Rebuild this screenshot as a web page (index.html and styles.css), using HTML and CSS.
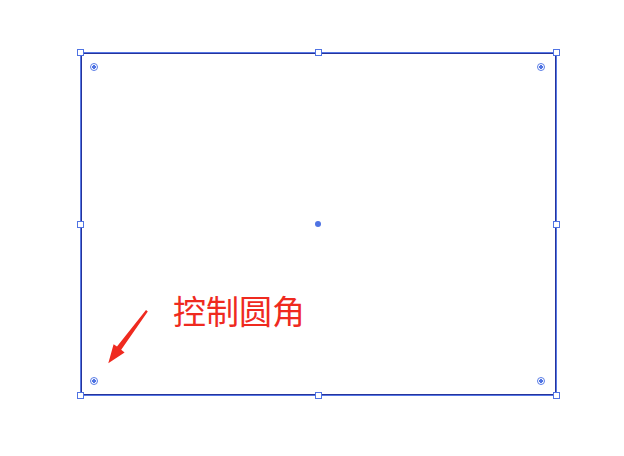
FILE: index.html
```html
<!DOCTYPE html>
<html lang="zh">
<head>
<meta charset="utf-8">
<link rel="stylesheet" href="styles.css">
</head>
<body>
<div class="page">
  <div class="frame">
    <span class="handle h-tl"></span>
    <span class="handle h-tm"></span>
    <span class="handle h-tr"></span>
    <span class="handle h-ml"></span>
    <span class="handle h-mr"></span>
    <span class="handle h-bl"></span>
    <span class="handle h-bm"></span>
    <span class="handle h-br"></span>
    <span class="radius r-tl"></span>
    <span class="radius r-tr"></span>
    <span class="radius r-bl"></span>
    <span class="radius r-br"></span>
    <span class="center-dot"></span>
    <span class="label">控制圆角</span>
    <svg class="arrow" width="60" height="70" viewBox="100 300 60 70">
      <polygon points="147.8,311.4 121.2,349.8 124.6,352.4 108.3,363.2 113.6,344.2 117.0,346.6 146.0,310.0" fill="#ef2a1f"/>
    </svg>
  </div>
</div>
</body>
</html>
```
FILE: styles.css
```css
html, body {
  margin: 0;
  padding: 0;
  background: #ffffff;
}
.page {
  width: 624px;
  height: 456px;
  padding: 52px 0 0 80px;
  box-sizing: border-box;
}
.frame {
  position: relative;
  width: 477px;
  height: 344px;
  box-sizing: border-box;
  border: 1px solid #5577e6;
  box-shadow: inset 0 0 0 1px #27339a;
}
.handle {
  position: absolute;
  width: 7px;
  height: 7px;
  box-sizing: border-box;
  background: #ffffff;
  border: 1px solid #4f73e3;
}
.h-tl { left: -4px; top: -4px; }
.h-tm { left: 234px; top: -4px; }
.h-tr { right: -4px; top: -4px; }
.h-ml { left: -4px; top: 168px; }
.h-mr { right: -4px; top: 168px; }
.h-bl { left: -4px; bottom: -4px; }
.h-bm { left: 234px; bottom: -4px; }
.h-br { right: -4px; bottom: -4px; }
.radius {
  position: absolute;
  width: 8px;
  height: 8px;
  box-sizing: border-box;
  border: 1px solid #5a7de6;
  border-radius: 50%;
  background: radial-gradient(circle, #4f73e3 0 1.8px, #ffffff 2.1px);
}
.r-tl { left: 9px; top: 10px; }
.r-tr { right: 11px; top: 10px; }
.r-bl { left: 9px; bottom: 10px; }
.r-br { right: 11px; bottom: 10px; }
.center-dot {
  position: absolute;
  left: 234px;
  top: 168px;
  width: 6px;
  height: 6px;
  border-radius: 50%;
  background: #4f73e3;
}
.label {
  position: absolute;
  left: 92px;
  top: 241px;
  font-family: "Noto Sans CJK SC", "Noto Sans", sans-serif;
  font-size: 33px;
  line-height: 33px;
  color: #ef2a1f;
  white-space: nowrap;
}
.arrow {
  position: absolute;
  left: 19px;
  top: 247px;
}
```
